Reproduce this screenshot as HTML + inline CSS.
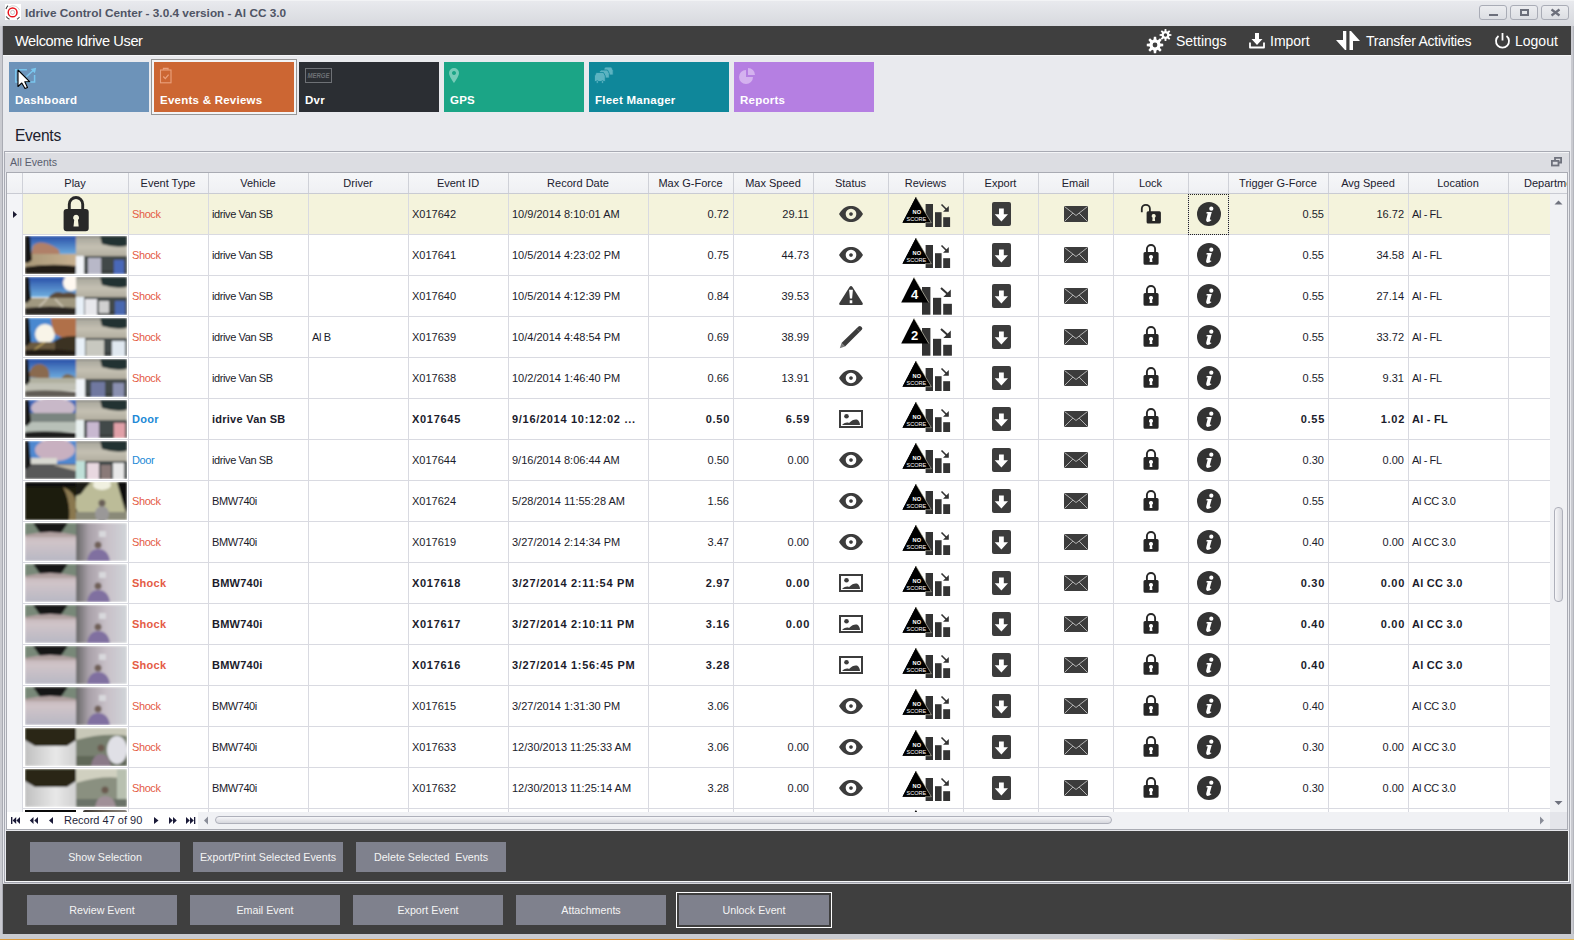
<!DOCTYPE html><html><head><meta charset="utf-8"><style>
html,body{margin:0;padding:0;}
body{width:1574px;height:940px;position:relative;overflow:hidden;background:#e9eaee;font-family:"Liberation Sans", sans-serif;}
div{box-sizing:border-box;}
.t{position:absolute;white-space:nowrap;font-size:11px;color:#1b1b2b;}
.r{text-align:right;}
.tx{letter-spacing:-0.4px;}
.b{font-weight:bold;letter-spacing:0.25px;}
.bn{font-weight:bold;letter-spacing:0.7px;}
.btn{position:absolute;width:150px;height:30px;background:#7f818d;color:#f4f4f4;font-size:10.7px;text-align:center;line-height:30px;}
</style></head><body>
<svg width="0" height="0" style="position:absolute">
<defs>
<g id="appicon">
 <rect x="0" y="0" width="16" height="16" fill="#fff"/>
 <path d="M1,5 A7.8,7.8 0 0 1 3,1.6 M1.2,12.5 A7.8,7.8 0 0 0 4.5,15.2 M12,15.2 A7.8,7.8 0 0 0 14.5,13" stroke="#444" stroke-width="1.1" fill="none"/>
 <path d="M4,3 A7,7 0 0 1 14.5,6" stroke="#c8c8c8" stroke-width="0.8" fill="none"/>
 <circle cx="7.6" cy="8.4" r="4.4" stroke="#e8141c" stroke-width="1.5" fill="none"/>
 <circle cx="7.6" cy="8.4" r="2" stroke="#b0b0b0" stroke-width="0.7" fill="none"/>
</g>
<g id="wmin"><rect x="10" y="9" width="9" height="2" fill="#6c6f7b"/></g>
<g id="wmax"><rect x="11" y="5" width="7" height="5" stroke="#6c6f7b" stroke-width="2" fill="none"/></g>
<g id="wclose"><path d="M10.5,4.5 L18.5,10.5 M18.5,4.5 L10.5,10.5" stroke="#6c6f7b" stroke-width="2.2"/></g>
<g id="gears" fill="#fff" fill-rule="evenodd">
 <path d="M7.56,11.59 L7.83,8.78 L10.17,8.78 L10.44,11.59 L11.81,12.16 L13.98,10.36 L15.64,12.02 L13.84,14.19 L14.41,15.56 L17.22,15.83 L17.22,18.17 L14.41,18.44 L13.84,19.81 L15.64,21.98 L13.98,23.64 L11.81,21.84 L10.44,22.41 L10.17,25.22 L7.83,25.22 L7.56,22.41 L6.19,21.840 L4.02,23.64 L2.36,21.98 L4.16,19.81 L3.59,18.44 L0.78,18.17 L0.78,15.83 L3.59,15.56 L4.16,14.19 L2.36,12.02 L4.02,10.36 L6.19,12.16 Z M11.4,17 A2.4,2.4 0 1 0 6.6,17 A2.4,2.4 0 1 0 11.4,17 Z"/>
 <path d="M18.47,3.13 L18.65,1.06 L20.35,1.06 L20.53,3.13 L21.51,3.54 L23.10,2.20 L24.30,3.40 L22.96,4.99 L23.37,5.97 L25.44,6.15 L25.44,7.85 L23.37,8.03 L22.96,9.01 L24.30,10.60 L23.10,11.80 L21.51,10.46 L20.53,10.87 L20.35,12.94 L18.65,12.94 L18.47,10.87 L17.49,10.46 L15.90,11.80 L14.70,10.60 L16.04,9.01 L15.63,8.03 L13.56,7.85 L13.56,6.15 L15.63,5.97 L16.04,4.99 L14.70,3.40 L15.90,2.20 L17.49,3.54 Z M21.2,7 A1.7,1.7 0 1 0 17.8,7 A1.7,1.7 0 1 0 21.2,7 Z"/>
</g>
<g id="import">
 <path d="M6,0 H10 V6 H13.5 L8,12 L2.5,6 H6 Z" fill="#fff"/>
 <path d="M1,9.5 V14.5 H15 V9.5" fill="none" stroke="#fff" stroke-width="1.8" stroke-linejoin="round"/>
</g>
<g id="transfer" fill="#fff">
 <path d="M8,1 H11.3 V20 H10 L1,10 H8 Z"/>
 <path d="M14.5,1 H16 L25,11 H18 V20 H14.5 Z"/>
</g>
<g id="power">
 <path d="M4.5,4 A6.5,6.5 0 1 0 12.5,4" fill="none" stroke="#fff" stroke-width="1.8"/>
 <path d="M8.5,1 V8.5" stroke="#fff" stroke-width="1.8"/>
</g>
<g id="tdash" fill="none" stroke="#7ac6ee" stroke-width="1.5">
 <path d="M17.9,7.8 H6.7 V20 H25.6 V13"/>
 <path d="M17.3,14.7 L25.5,7.3"/>
 <path d="M27.2,5.8 L21.6,7.1 L25.9,11.3 Z" fill="#7ac6ee" stroke="none"/>
</g>
<g id="tevents" fill="none" stroke="#eaa07c" stroke-width="1.1">
 <rect x="6.5" y="8" width="10.5" height="12.8"/>
 <path d="M9.5,7.8 V6.5 H14 V7.8" stroke-width="1.3"/>
 <path d="M9.3,14.5 L11.3,16.6 L14.6,12.6" stroke-width="1.3"/>
</g>
<g id="tdvr">
 <rect x="6.5" y="6.5" width="26" height="14" fill="none" stroke="#6e7176" stroke-width="1"/>
 <text x="19.5" y="16" font-size="6.5" font-weight="bold" font-style="italic" fill="#6e7176" text-anchor="middle" font-family="Liberation Sans" textLength="22" lengthAdjust="spacingAndGlyphs">MERGE</text>
</g>
<g id="tgps" fill="#76ccb8">
 <path d="M10,6 A5,5 0 0 1 15,11 C15,14.5 10,21 10,21 C10,21 5,14.5 5,11 A5,5 0 0 1 10,6 Z M10,9 A2,2 0 1 0 10.01,9 Z" fill-rule="evenodd"/>
</g>
<g id="tfleet" fill="#5cb3c1" stroke="#0f879a" stroke-width="0.8">
 <path d="M15,6.5 L16.6,5 H22.5 L24.2,8.5 V13 H15 Z"/>
 <path d="M10.5,9.5 L12.2,8 H18.5 L20.3,11.5 V16 H10.5 Z"/>
 <path d="M5.5,14 L7.3,10.5 H14.5 L16.3,14 V19.5 H5.5 Z"/>
 <circle cx="8.3" cy="20" r="1.3"/><circle cx="13.5" cy="20" r="1.3"/>
</g>
<g id="treports" fill="#d4b2ef">
 <path d="M12,8 A7,7 0 1 0 19,15 H12 Z"/>
 <path d="M14,6 A7,7 0 0 1 21,13 H14 Z"/>
</g>
<g id="cursor">
 <path d="M1,1 V17.5 L4.8,14 L8,19.5 L10.5,18.5 L7.8,12.8 H12.8 Z" fill="#fff" stroke="#000" stroke-width="1.1" stroke-linejoin="round"/>
</g>
<g id="restore" fill="none" stroke="#6e717c" stroke-width="1.8">
 <path d="M4,3 V0.9 H10.1 V5.5 H8"/>
 <rect x="0.9" y="3.9" width="6.6" height="4.6"/>
</g>
<g id="biglock" fill="#282828">
 <path d="M7.3,14 V8.2 A6.7,6.7 0 0 1 20.7,8.2 V14" fill="none" stroke="#282828" stroke-width="2.9"/>
 <path d="M1.6,16 A3,3 0 0 1 4.6,13 H23.7 A3,3 0 0 1 26.7,16 V32.3 A3,3 0 0 1 23.7,35.3 H4.6 A3,3 0 0 1 1.6,32.3 Z M14.1,18.7 A3,3 0 0 0 12.2,24 L11.5,30.5 H16.7 L16,24 A3,3 0 0 0 14.1,18.7 Z" fill-rule="evenodd"/>
</g>
<g id="eye">
 <path d="M0,8 C4,1.5 8,0 12,0 C16,0 20,1.5 24,8 C20,14.5 16,16 12,16 C8,16 4,14.5 0,8 Z M12,2.7 A5.3,5.3 0 1 0 12.01,2.7 Z M12,6.2 A1.8,1.8 0 1 1 11.99,6.2 Z" fill="#3c3c3c" fill-rule="evenodd"/>
</g>
<g id="warn">
 <path d="M10.5,2 Q12,0 13.5,2 L23.6,18 Q24.4,20 22.5,20 H1.5 Q-0.4,20 0.4,18 Z M10.1,4.8 H13.9 L13.1,13.6 H10.9 Z M10.7,15.2 H13.3 V18.2 H10.7 Z" fill="#3c3c3c" fill-rule="evenodd"/>
</g>
<g id="pencil">
 <path d="M19.5,1.5 Q20.8,0.3 22,1.5 L22.8,2.3 Q24,3.5 22.8,4.8 L6,21.5 L2.5,18 Z" fill="#3c3c3c"/>
 <path d="M2.5,18 L6,21.5 L0.8,23.2 Z" fill="#7a7a7a"/>
 <path d="M17.6,3.4 L21,6.8" stroke="#7a7a7a" stroke-width="0.7"/>
</g>
<g id="image">
 <rect x="1" y="1" width="22" height="16" fill="none" stroke="#3c3c3c" stroke-width="2"/>
 <circle cx="7.5" cy="6.2" r="2.3" fill="#3c3c3c"/>
 <path d="M3,15 C6,12.5 8,12 10,13 C13,10 15.5,9 18,9.5 C20,10.5 21,13 21,15 Z" fill="#3c3c3c"/>
</g>
<g id="noscore">
 <path d="M13.9,1 L29.3,26.7 H0.5 Z" fill="#000"/>
 <path d="M13.9,1 L29.3,26.7" stroke="#e4e2c8" stroke-width="0.6"/>
 <rect x="23.6" y="8" width="7.4" height="23" fill="#333"/>
 <rect x="33" y="16.2" width="6.6" height="14.8" fill="#333"/>
 <rect x="41.2" y="21.2" width="6.9" height="9.8" fill="#333"/>
 <path d="M13.9,1 L29.3,26.7 H0.5 Z" fill="#000"/>
 <path d="M14.5,2 L29.3,26.7 L23,26.7" fill="none" stroke="#e8e6d0" stroke-width="0.5"/>
 <path d="M39.5,8.5 L45.5,14.5" stroke="#333" stroke-width="1.6"/>
 <path d="M46.8,10 V15.8 H41 Z" fill="#333"/>
 <text x="14.8" y="18.2" font-size="5.6" fill="#fff" text-anchor="middle" font-family="Liberation Sans" font-weight="bold">NO</text>
 <text x="14.3" y="25" font-size="5.5" fill="#fff" text-anchor="middle" font-family="Liberation Sans" textLength="19.6" lengthAdjust="spacingAndGlyphs">SCORE</text>
</g>
<g id="noscore_partial">
 <path d="M13.9,1 L15.7,4 H12.1 Z" fill="#000"/>
</g>
<g id="scorebase">
 <rect x="22" y="11" width="8.4" height="27.7" fill="#333"/>
 <rect x="33" y="21.8" width="8.2" height="16.9" fill="#333"/>
 <rect x="43.2" y="27.8" width="8.7" height="10.9" fill="#333"/>
 <path d="M14,1.3 L28.8,26.5 H1.2 Z" fill="#000"/>
 <path d="M14,1.3 L28.8,26.5" stroke="#e8e6d0" stroke-width="0.6"/>
 <path d="M41,12 L48.5,18.8" stroke="#333" stroke-width="2"/>
 <path d="M50.8,13.5 V21 H43.3 Z" fill="#333"/>
</g>
<g id="score4"><use href="#scorebase"/><text x="14.6" y="23.3" font-size="13" font-weight="bold" fill="#fff" text-anchor="middle" font-family="Liberation Sans">4</text></g>
<g id="score2"><use href="#scorebase"/><text x="14.6" y="23.3" font-size="13" font-weight="bold" fill="#fff" text-anchor="middle" font-family="Liberation Sans">2</text></g>
<g id="export">
 <rect x="0" y="0" width="19" height="24" rx="2" fill="#3c3c3c"/>
 <path d="M7,6.4 H11.8 V12.2 H16 L9.4,19.6 L2.7,12.2 H7 Z" fill="#fff"/>
</g>
<g id="email">
 <rect x="0" y="0" width="24" height="16" rx="1.2" fill="#3c3c3c"/>
 <path d="M0.8,0.8 L12,9.5 L23.2,0.8 M0.8,15.2 L8.8,7.2 M23.2,15.2 L15.2,7.2" fill="none" stroke="#e6e6e6" stroke-width="0.7"/>
</g>
<g id="lock">
 <path d="M3.9,9 V5.1 A4.1,4.1 0 0 1 12.1,5.1 V9" fill="none" stroke="#262626" stroke-width="1.9"/>
 <path d="M0.5,9.5 A1.5,1.5 0 0 1 2,8 H14.1 A1.5,1.5 0 0 1 15.6,9.5 V19.3 A1.5,1.5 0 0 1 14.1,20.8 H2 A1.5,1.5 0 0 1 0.5,19.3 Z M8,11 A2,2 0 0 0 6.9,14.7 L6.6,17.9 H9.4 L9.1,14.7 A2,2 0 0 0 8,11 Z" fill="#262626" fill-rule="evenodd"/>
</g>
<g id="unlock">
 <path d="M1.8,9.2 V5.85 A4.05,4.05 0 0 1 9.9,5.85 V9" fill="none" stroke="#262626" stroke-width="1.8"/>
 <path d="M6.6,9.7 A1.5,1.5 0 0 1 8.1,8.2 H19.4 A1.5,1.5 0 0 1 20.9,9.7 V19.1 A1.5,1.5 0 0 1 19.4,20.6 H8.1 A1.5,1.5 0 0 1 6.6,19.1 Z M13.7,11 A2,2 0 0 0 12.6,14.7 L12.3,18 H15.1 L14.8,14.7 A2,2 0 0 0 13.7,11 Z" fill="#262626" fill-rule="evenodd"/>
</g>
<g id="info">
 <circle cx="12" cy="12" r="12" fill="#333"/>
 <circle cx="14.3" cy="6.7" r="2.1" fill="#fff"/>
 <path d="M9.6,10 H14.8 L12.9,16.8 Q12.6,18 14,17.5 L14.4,18.3 Q12.2,20.1 10.3,19.9 Q8.7,19.5 9.2,17.6 L10.7,11.4 H9.4 Z" fill="#fff"/>
</g>
<g id="rowarrow"><path d="M2,2 L6,5.5 L2,9 Z" fill="#1a1a30"/></g>
<g id="vup"><path d="M1.5,6.5 L5.5,2.5 L9.5,6.5 Z" fill="#6f727e"/></g>
<g id="vdown"><path d="M1.5,2 L5.5,6 L9.5,2 Z" fill="#6f727e"/></g>
<g id="hleft"><path d="M5,0.5 L1,4.5 L5,8.5 Z" fill="#8a8d98"/></g>
<g id="hright"><path d="M2,0.5 L6,4.5 L2,8.5 Z" fill="#8a8d98"/></g>
<g id="nav" fill="#1a1a38">
 <rect x="3" y="3" width="1.4" height="7"/>
 <path d="M8.2,3 L4.6,6.5 L8.2,10 Z M12,3 L8.4,6.5 L12,10 Z"/>
 <path d="M25.5,3 L21.8,6.5 L25.5,10 Z M30,3 L26.3,6.5 L30,10 Z"/>
 <path d="M45,3 L41,6.5 L45,10 Z"/>
 <path d="M146,3 L150.5,6.5 L146,10 Z"/>
 <path d="M161,3 L164.8,6.5 L161,10 Z M165,3 L168.8,6.5 L165,10 Z"/>
 <path d="M178,3 L181.8,6.5 L178,10 Z M182,3 L185.8,6.5 L182,10 Z"/>
 <rect x="186" y="3" width="1.3" height="7"/>
</g>
</defs>
</svg>

<svg width="0" height="0" style="position:absolute">
<defs>
<filter id="bl" x="-5%" y="-5%" width="110%" height="110%"><feGaussianBlur stdDeviation="0.9"/></filter>
<linearGradient id="sky1" x1="0" y1="0" x2="0" y2="1"><stop offset="0" stop-color="#2a50a8"/><stop offset="1" stop-color="#70b0e0"/></linearGradient>
<linearGradient id="road1" x1="0" y1="0" x2="1" y2="0"><stop offset="0" stop-color="#a89878"/><stop offset="1" stop-color="#c8b090"/></linearGradient>
<linearGradient id="ceil" x1="0" y1="0" x2="0" y2="1"><stop offset="0" stop-color="#a8a69c"/><stop offset="0.5" stop-color="#c4c0b2"/><stop offset="1" stop-color="#b0ac9e"/></linearGradient>
<linearGradient id="domeH" x1="0" y1="0" x2="0" y2="1"><stop offset="0" stop-color="#a89898"/><stop offset="0.5" stop-color="#d0c4c8"/><stop offset="1" stop-color="#b8b8c4"/></linearGradient>
<linearGradient id="roomH" x1="0" y1="0" x2="1" y2="0"><stop offset="0" stop-color="#686868"/><stop offset="0.25" stop-color="#a8a0a8"/><stop offset="0.6" stop-color="#c8c0c8"/><stop offset="1" stop-color="#d0d4d8"/></linearGradient>
<linearGradient id="floorI" x1="0" y1="0" x2="1" y2="0"><stop offset="0" stop-color="#c0c0c0"/><stop offset="0.6" stop-color="#e8e8e8"/><stop offset="1" stop-color="#d0d0d0"/></linearGradient>

<g id="vanR">
 <rect x="51" y="0" width="51" height="38" fill="#4a4a48"/>
 <rect x="51" y="1" width="51" height="20" fill="url(#ceil)"/>
 <path d="M75,0 H102 V10 Q90,12 77,8 Z" fill="#203030"/>
 <rect x="51" y="20" width="51" height="18" fill="#42494a"/>
 <rect x="51" y="34" width="51" height="4" fill="#3a4040"/>
</g>

<g id="thA">
 <g filter="url(#bl)">
 <rect x="0" y="0" width="51" height="19" fill="url(#sky1)"/>
 <path d="M8,10 Q12,5 20,7 Q28,9 34,14 L35,20 H6 Z" fill="#b08068"/>
 <rect x="0" y="18" width="51" height="14" fill="url(#road1)"/>
 <path d="M0,31 Q25,27 51,30 V38 H0 Z" fill="#201c18"/>
 <path d="M0,0 H5 L7,24 L3,27 H0 Z" fill="#141414"/>
 <use href="#vanR"/>
 <rect x="51" y="20" width="8" height="18" fill="#f2f4f8"/>
 <rect x="63" y="22" width="13" height="16" fill="#b8b8c8"/>
 <rect x="89" y="24" width="10" height="14" fill="#4a68b8"/>
 </g>
</g>
<g id="thB">
 <g filter="url(#bl)">
 <rect x="0" y="0" width="51" height="20" fill="url(#sky1)"/>
 <circle cx="46" cy="6" r="8" fill="#fff8f0"/>
 <path d="M24,20 Q30,13 38,16 Q46,14 51,17 V22 H24 Z" fill="#5a4a38"/>
 <rect x="0" y="21" width="51" height="11" fill="#a09880"/>
 <path d="M12,32 L22,22 M40,32 L30,22" stroke="#d8d0c0" stroke-width="1.2"/>
 <path d="M0,31 Q25,28 51,31 V38 H0 Z" fill="#2a2620"/>
 <path d="M0,0 H4 L6,22 L2,26 H0 Z" fill="#141414"/>
 <use href="#vanR"/>
 <rect x="51" y="20" width="8" height="18" fill="#e8f0f8"/>
 <rect x="60" y="22" width="12" height="16" fill="#e8e8ec"/>
 <rect x="74" y="24" width="10" height="12" fill="#d0d0d0"/>
 <rect x="90" y="24" width="10" height="14" fill="#4a68b0"/>
 </g>
</g>
<g id="thC">
 <g filter="url(#bl)">
 <rect x="0" y="0" width="51" height="24" fill="#4a88d0"/>
 <circle cx="20" cy="16" r="10" fill="#f8f4e8"/>
 <path d="M26,0 H51 V20 Q40,22 30,16 Q26,8 26,0 Z" fill="#b07048"/>
 <path d="M28,24 Q36,17 51,18 V34 H28 Z" fill="#3a3024"/>
 <rect x="0" y="24" width="30" height="10" fill="#6a5a40"/>
 <path d="M6,34 L20,24" stroke="#e8c870" stroke-width="1"/>
 <path d="M0,32 Q25,30 51,33 V38 H0 Z" fill="#201c14"/>
 <path d="M0,0 H4 L6,24 L2,28 H0 Z" fill="#141414"/>
 <use href="#vanR"/>
 <rect x="51" y="20" width="9" height="18" fill="#e8f0f8"/>
 <rect x="61" y="22" width="18" height="16" fill="#c8c8c0"/>
 <rect x="87" y="23" width="13" height="15" fill="#e0e8f0"/>
 </g>
</g>
<g id="thD">
 <g filter="url(#bl)">
 <rect x="0" y="0" width="51" height="20" fill="url(#sky1)"/>
 <path d="M3,18 Q6,4 16,5 Q26,8 24,20 Z" fill="#8a6a50"/>
 <path d="M36,20 Q40,13 46,16 Q50,17 51,20 Z" fill="#7a6a50"/>
 <rect x="0" y="19" width="51" height="13" fill="#b0b0a0"/>
 <rect x="0" y="24" width="51" height="8" fill="#c0c0b4"/>
 <path d="M0,32 Q25,30 51,33 V38 H0 Z" fill="#605c54"/>
 <path d="M0,0 H3 L5,22 L2,26 H0 Z" fill="#141414"/>
 <use href="#vanR"/>
 <rect x="51" y="20" width="9" height="18" fill="#f0f4f8"/>
 <rect x="66" y="23" width="14" height="15" fill="#7078a0"/>
 <rect x="88" y="24" width="11" height="14" fill="#8a90b0"/>
 </g>
</g>
<g id="thE">
 <g filter="url(#bl)">
 <rect x="0" y="0" width="51" height="22" fill="#4068b8"/>
 <ellipse cx="28" cy="8" rx="22" ry="10" fill="#c8b8c8"/>
 <rect x="4" y="13" width="47" height="9" fill="#7a8480"/>
 <rect x="0" y="22" width="51" height="10" fill="#b8c0b8"/>
 <path d="M0,32 Q25,30 51,33 V38 H0 Z" fill="#1a1a1a"/>
 <path d="M0,0 H4 L6,22 L2,26 H0 Z" fill="#141414"/>
 <use href="#vanR"/>
 <rect x="51" y="20" width="8" height="18" fill="#e8f0f0"/>
 <rect x="62" y="22" width="12" height="16" fill="#c8b8d0"/>
 <rect x="89" y="23" width="11" height="15" fill="#e0a0a8"/>
 </g>
</g>
<g id="thF">
 <g filter="url(#bl)">
 <rect x="0" y="0" width="51" height="24" fill="#5088d0"/>
 <ellipse cx="30" cy="9" rx="20" ry="11" fill="#c8b0c0"/>
 <rect x="6" y="17" width="26" height="7" fill="#d8d8d0"/>
 <rect x="0" y="23" width="51" height="15" fill="#585858"/>
 <path d="M28,24 L51,30 V24 Z" fill="#c0b8a8"/>
 <path d="M0,0 H4 L6,24 L2,28 H0 Z" fill="#141414"/>
 <use href="#vanR"/>
 <rect x="51" y="20" width="9" height="18" fill="#c0e0d8"/>
 <rect x="62" y="22" width="12" height="16" fill="#e8d8e0"/>
 <rect x="76" y="24" width="10" height="14" fill="#8a7a78"/>
 <rect x="88" y="22" width="11" height="16" fill="#e8e8e8"/>
 </g>
</g>
<g id="thG">
 <g filter="url(#bl)">
 <rect x="0" y="0" width="51" height="38" fill="#1e1a0e"/>
 <rect x="0" y="0" width="51" height="5" fill="#0c0c0c"/>
 <path d="M38,5 Q50,10 51,20 V38 H44 Q46,20 38,5 Z" fill="#8a7850"/>
 <rect x="51" y="0" width="51" height="38" fill="#bcbc98"/>
 <ellipse cx="77" cy="3" rx="9" ry="5" fill="#f0f0e0"/>
 <path d="M51,0 H66 Q60,6 56,12 L51,14 Z" fill="#1a1a14"/>
 <path d="M92,0 H102 V34 Q98,22 92,0 Z" fill="#101010"/>
 <path d="M51,26 Q56,38 51,38 Z" fill="#303028"/>
 <rect x="51" y="30" width="51" height="8" fill="#8a8a78"/>
 <ellipse cx="77" cy="32" rx="7" ry="8" fill="#9a9898"/>
 <circle cx="77" cy="21" r="3.5" fill="#6a6058"/>
 </g>
</g>
<g id="thH">
 <g filter="url(#bl)">
 <rect x="0" y="0" width="51" height="38" fill="url(#domeH)"/>
 <rect x="0" y="0" width="51" height="12" fill="#788878"/>
 <path d="M8,0 H43 L36,10 H15 Z" fill="#161616"/>
 <path d="M0,12 Q25,6 51,12 V14 H0 Z" fill="#b0a0a0"/>
 <rect x="51" y="0" width="51" height="38" fill="url(#roomH)"/>
 <rect x="74" y="8" width="7" height="6" fill="#d8d8dc"/>
 <path d="M62,38 Q64,26 73,26 Q83,26 85,38 Z" fill="#8070a0"/>
 <circle cx="73" cy="22" r="3.5" fill="#706058"/>
 </g>
</g>
<g id="thI">
 <g filter="url(#bl)">
 <rect x="0" y="0" width="51" height="38" fill="url(#floorI)"/>
 <path d="M0,0 H51 V12 L42,18 H10 L0,12 Z" fill="#2a2618"/>
 <rect x="51" y="0" width="51" height="38" fill="#788070"/>
 <path d="M51,0 H102 V8 Q80,4 51,12 Z" fill="#c8c8b8"/>
 <rect x="51" y="28" width="51" height="10" fill="#606858"/>
 <ellipse cx="92" cy="22" rx="10" ry="14" fill="#e0e0e6"/>
 <path d="M66,38 Q68,26 76,26 Q84,26 86,38 Z" fill="#8a7a88"/>
 <circle cx="76" cy="20" r="3.5" fill="#6a5a50"/>
 </g>
</g>
<g id="thJ">
 <g filter="url(#bl)">
 <rect x="0" y="0" width="51" height="38" fill="url(#floorI)"/>
 <path d="M0,0 H51 V12 L42,18 H10 L0,12 Z" fill="#2a2618"/>
 <rect x="51" y="0" width="51" height="38" fill="#8a9080"/>
 <path d="M51,0 H102 V10 Q80,5 51,14 Z" fill="#d0d0c0"/>
 <rect x="92" y="0" width="10" height="38" fill="#b8c0b0"/>
 <rect x="51" y="30" width="51" height="8" fill="#6a7268"/>
 <path d="M70,38 Q72,27 80,27 Q89,27 91,38 Z" fill="#a09098"/>
 <circle cx="80" cy="21" r="3.5" fill="#6a5a50"/>
 </g>
</g>
</defs>
</svg>

<div style="position:absolute;left:0px;top:0px;width:1574px;height:26px;background:linear-gradient(#e9eaee,#d7d9de);"></div>
<div style="position:absolute;left:0px;top:0px;width:1574px;height:1px;background:#f2f3f5;"></div>
<div class="t" style="left:25px;top:6px;font-size:11.8px;font-weight:bold;color:#4f5464;letter-spacing:0px">Idrive Control Center - 3.0.4 version - Al CC 3.0</div>
<svg style="position:absolute;left:5px;top:4px" width="16" height="16"><use href="#appicon"/></svg>
<div style="position:absolute;left:1479px;top:5px;width:28px;height:15px;border:1px solid #a9acb6;border-radius:3px;background:linear-gradient(#ecedf0,#dcdee3);"></div>
<svg style="position:absolute;left:1479px;top:5px" width="28" height="15"><use href="#wmin"/></svg>
<div style="position:absolute;left:1510px;top:5px;width:28px;height:15px;border:1px solid #a9acb6;border-radius:3px;background:linear-gradient(#ecedf0,#dcdee3);"></div>
<svg style="position:absolute;left:1510px;top:5px" width="28" height="15"><use href="#wmax"/></svg>
<div style="position:absolute;left:1541px;top:5px;width:28px;height:15px;border:1px solid #a9acb6;border-radius:3px;background:linear-gradient(#ecedf0,#dcdee3);"></div>
<svg style="position:absolute;left:1541px;top:5px" width="28" height="15"><use href="#wclose"/></svg>
<div style="position:absolute;left:0px;top:26px;width:3px;height:914px;background:#c9cad0;"></div>
<div style="position:absolute;left:2px;top:26px;width:1px;height:908px;background:#a9abb3;"></div>
<div style="position:absolute;left:1571px;top:26px;width:3px;height:914px;background:#c9cad0;"></div>
<div style="position:absolute;left:1573px;top:26px;width:1px;height:914px;background:#b4b6bd;"></div>
<div style="position:absolute;left:0px;top:934px;width:1574px;height:6px;background:#c9cbd1;"></div>
<div style="position:absolute;left:0px;top:939px;width:1574px;height:1px;background:linear-gradient(90deg,#dc9a3c,#d88a30 45%,#f2e8de 55%,#f4eee8 77%,#e8b848 80%,#eabc50);"></div>
<div style="position:absolute;left:3px;top:26px;width:1568px;height:29px;background:#3f3f3f;"></div>
<div style="position:absolute;left:3px;top:55px;width:1568px;height:1px;background:#f6f7f9;"></div>
<div class="t" style="left:15px;top:32px;font-size:14.6px;letter-spacing:-0.4px;line-height:18px;color:#fff">Welcome Idrive User</div>
<svg style="position:absolute;left:1146px;top:28px" width="26" height="26"><use href="#gears"/></svg>
<div class="t" style="left:1176px;top:33px;font-size:14px;line-height:17px;color:#fff">Settings</div>
<svg style="position:absolute;left:1249px;top:33px" width="16" height="16"><use href="#import"/></svg>
<div class="t" style="left:1270px;top:33px;font-size:14px;line-height:17px;color:#fff">Import</div>
<svg style="position:absolute;left:1335px;top:30px" width="25" height="21"><use href="#transfer"/></svg>
<div class="t" style="left:1366px;top:33px;font-size:14px;letter-spacing:-0.25px;line-height:17px;color:#fff">Transfer Activities</div>
<svg style="position:absolute;left:1494px;top:32px" width="17" height="18"><use href="#power"/></svg>
<div class="t" style="left:1515px;top:33px;font-size:14px;line-height:17px;color:#fff">Logout</div>
<div style="position:absolute;left:9px;top:62px;width:140px;height:50px;background:#6d93b9;"></div>
<svg style="position:absolute;left:9px;top:62px" width="40" height="30"><use href="#tdash"/></svg>
<div class="t b" style="left:15px;top:93px;font-size:11.5px;line-height:14px;color:#fff">Dashboard</div>
<div style="position:absolute;left:151px;top:59px;width:146px;height:56px;border:1px solid #969696;background:#f3f4f6;"></div>
<div style="position:absolute;left:154px;top:62px;width:140px;height:50px;background:#cc6633;"></div>
<svg style="position:absolute;left:154px;top:62px" width="40" height="30"><use href="#tevents"/></svg>
<div class="t b" style="left:160px;top:93px;font-size:11.5px;line-height:14px;color:#fff">Events &amp; Reviews</div>
<div style="position:absolute;left:299px;top:62px;width:140px;height:50px;background:#2b2e33;"></div>
<svg style="position:absolute;left:299px;top:62px" width="40" height="30"><use href="#tdvr"/></svg>
<div class="t b" style="left:305px;top:93px;font-size:11.5px;line-height:14px;color:#fff">Dvr</div>
<div style="position:absolute;left:444px;top:62px;width:140px;height:50px;background:#1ba586;"></div>
<svg style="position:absolute;left:444px;top:62px" width="40" height="30"><use href="#tgps"/></svg>
<div class="t b" style="left:450px;top:93px;font-size:11.5px;line-height:14px;color:#fff">GPS</div>
<div style="position:absolute;left:589px;top:62px;width:140px;height:50px;background:#0f879a;"></div>
<svg style="position:absolute;left:589px;top:62px" width="40" height="30"><use href="#tfleet"/></svg>
<div class="t b" style="left:595px;top:93px;font-size:11.5px;line-height:14px;color:#fff">Fleet Manager</div>
<div style="position:absolute;left:734px;top:62px;width:140px;height:50px;background:#b57fe2;"></div>
<svg style="position:absolute;left:734px;top:62px" width="40" height="30"><use href="#treports"/></svg>
<div class="t b" style="left:740px;top:93px;font-size:11.5px;line-height:14px;color:#fff">Reports</div>
<svg style="position:absolute;left:17px;top:69px" width="14" height="22"><use href="#cursor"/></svg>
<div class="t" style="left:15px;top:126px;font-size:15.6px;letter-spacing:-0.3px;line-height:19px;color:#20202c">Events</div>
<div style="position:absolute;left:4px;top:151px;width:1566px;height:733px;border:1px solid #a8aab3;background:#e9eaee;"></div>
<div style="position:absolute;left:5px;top:152px;width:1564px;height:20px;background:#dcdde2;"></div>
<div style="position:absolute;left:5px;top:152px;width:1564px;height:1px;background:#f4f5f7;"></div>
<div class="t" style="left:10px;top:156px;font-size:10.6px;line-height:13px;color:#5a5e6e">All Events</div>
<svg style="position:absolute;left:1551px;top:157px" width="12" height="10"><use href="#restore"/></svg>
<div style="position:absolute;left:6px;top:172px;width:1562px;height:658px;border:1px solid #a9abb3;background:#fff;"></div>
<div style="position:absolute;left:7px;top:173px;width:1560px;height:20px;background:linear-gradient(#f6f7f9,#eff0f3);"></div>
<div style="position:absolute;left:7px;top:193px;width:1560px;height:1px;background:#c9cbd3;"></div>
<div class="t" style="left:22px;top:173px;width:106px;text-align:center;line-height:20px;color:#20202e">Play</div>
<div class="t" style="left:128px;top:173px;width:80px;text-align:center;line-height:20px;color:#20202e">Event Type</div>
<div class="t" style="left:208px;top:173px;width:100px;text-align:center;line-height:20px;color:#20202e">Vehicle</div>
<div class="t" style="left:308px;top:173px;width:100px;text-align:center;line-height:20px;color:#20202e">Driver</div>
<div class="t" style="left:408px;top:173px;width:100px;text-align:center;line-height:20px;color:#20202e">Event ID</div>
<div class="t" style="left:508px;top:173px;width:140px;text-align:center;line-height:20px;color:#20202e">Record Date</div>
<div class="t" style="left:648px;top:173px;width:85px;text-align:center;line-height:20px;color:#20202e">Max G-Force</div>
<div class="t" style="left:733px;top:173px;width:80px;text-align:center;line-height:20px;color:#20202e">Max Speed</div>
<div class="t" style="left:813px;top:173px;width:75px;text-align:center;line-height:20px;color:#20202e">Status</div>
<div class="t" style="left:888px;top:173px;width:75px;text-align:center;line-height:20px;color:#20202e">Reviews</div>
<div class="t" style="left:963px;top:173px;width:75px;text-align:center;line-height:20px;color:#20202e">Export</div>
<div class="t" style="left:1038px;top:173px;width:75px;text-align:center;line-height:20px;color:#20202e">Email</div>
<div class="t" style="left:1113px;top:173px;width:75px;text-align:center;line-height:20px;color:#20202e">Lock</div>
<div class="t" style="left:1228px;top:173px;width:100px;text-align:center;line-height:20px;color:#20202e">Trigger G-Force</div>
<div class="t" style="left:1328px;top:173px;width:80px;text-align:center;line-height:20px;color:#20202e">Avg Speed</div>
<div class="t" style="left:1408px;top:173px;width:100px;text-align:center;line-height:20px;color:#20202e">Location</div>
<div class="t" style="left:1524px;top:173px;width:43px;overflow:hidden;line-height:20px;color:#20202e">Department</div>
<div style="position:absolute;left:22px;top:173px;width:1px;height:20px;background:#cfd1d8;"></div>
<div style="position:absolute;left:128px;top:173px;width:1px;height:20px;background:#cfd1d8;"></div>
<div style="position:absolute;left:208px;top:173px;width:1px;height:20px;background:#cfd1d8;"></div>
<div style="position:absolute;left:308px;top:173px;width:1px;height:20px;background:#cfd1d8;"></div>
<div style="position:absolute;left:408px;top:173px;width:1px;height:20px;background:#cfd1d8;"></div>
<div style="position:absolute;left:508px;top:173px;width:1px;height:20px;background:#cfd1d8;"></div>
<div style="position:absolute;left:648px;top:173px;width:1px;height:20px;background:#cfd1d8;"></div>
<div style="position:absolute;left:733px;top:173px;width:1px;height:20px;background:#cfd1d8;"></div>
<div style="position:absolute;left:813px;top:173px;width:1px;height:20px;background:#cfd1d8;"></div>
<div style="position:absolute;left:888px;top:173px;width:1px;height:20px;background:#cfd1d8;"></div>
<div style="position:absolute;left:963px;top:173px;width:1px;height:20px;background:#cfd1d8;"></div>
<div style="position:absolute;left:1038px;top:173px;width:1px;height:20px;background:#cfd1d8;"></div>
<div style="position:absolute;left:1113px;top:173px;width:1px;height:20px;background:#cfd1d8;"></div>
<div style="position:absolute;left:1188px;top:173px;width:1px;height:20px;background:#cfd1d8;"></div>
<div style="position:absolute;left:1228px;top:173px;width:1px;height:20px;background:#cfd1d8;"></div>
<div style="position:absolute;left:1328px;top:173px;width:1px;height:20px;background:#cfd1d8;"></div>
<div style="position:absolute;left:1408px;top:173px;width:1px;height:20px;background:#cfd1d8;"></div>
<div style="position:absolute;left:1508px;top:173px;width:1px;height:20px;background:#cfd1d8;"></div>
<div style="position:absolute;left:7px;top:194px;width:15px;height:618px;background:#f3f4f7;"></div>
<div style="position:absolute;left:22px;top:194px;width:1528px;height:40px;background:#f4f3dc;"></div>
<svg style="position:absolute;left:62px;top:196px" width="28" height="37"><use href="#biglock"/></svg>
<div class="t tx" style="left:132px;top:194px;line-height:40px;color:#e45c46">Shock</div>
<div class="t tx" style="left:212px;top:194px;line-height:40px">idrive Van SB</div>
<div class="t" style="left:412px;top:194px;line-height:40px">X017642</div>
<div class="t" style="left:512px;top:194px;line-height:40px">10/9/2014 8:10:01 AM</div>
<div class="t r" style="left:648px;width:81px;top:194px;line-height:40px">0.72</div>
<div class="t r" style="left:733px;width:76px;top:194px;line-height:40px">29.11</div>
<div class="t r" style="left:1228px;width:96px;top:194px;line-height:40px">0.55</div>
<div class="t r" style="left:1328px;width:76px;top:194px;line-height:40px">16.72</div>
<div class="t tx" style="left:1412px;top:194px;line-height:40px">Al - FL</div>
<svg style="position:absolute;left:839px;top:206px" width="24" height="16"><use href="#eye"/></svg>
<svg style="position:absolute;left:902px;top:196px" width="50" height="34"><use href="#noscore"/></svg>
<svg style="position:absolute;left:992px;top:202px" width="19" height="24"><use href="#export"/></svg>
<svg style="position:absolute;left:1064px;top:206px" width="24" height="16"><use href="#email"/></svg>
<svg style="position:absolute;left:1140px;top:203px" width="22" height="21"><use href="#unlock"/></svg>
<svg style="position:absolute;left:1197px;top:202px" width="24" height="24"><use href="#info"/></svg>
<div style="position:absolute;left:22px;top:234px;width:1528px;height:1px;background:#d9dae1;"></div>
<svg style="position:absolute;left:25px;top:236px" width="102" height="38"><use href="#thA"/></svg>
<div class="t tx" style="left:132px;top:235px;line-height:40px;color:#e45c46">Shock</div>
<div class="t tx" style="left:212px;top:235px;line-height:40px">idrive Van SB</div>
<div class="t" style="left:412px;top:235px;line-height:40px">X017641</div>
<div class="t" style="left:512px;top:235px;line-height:40px">10/5/2014 4:23:02 PM</div>
<div class="t r" style="left:648px;width:81px;top:235px;line-height:40px">0.75</div>
<div class="t r" style="left:733px;width:76px;top:235px;line-height:40px">44.73</div>
<div class="t r" style="left:1228px;width:96px;top:235px;line-height:40px">0.55</div>
<div class="t r" style="left:1328px;width:76px;top:235px;line-height:40px">34.58</div>
<div class="t tx" style="left:1412px;top:235px;line-height:40px">Al - FL</div>
<svg style="position:absolute;left:839px;top:247px" width="24" height="16"><use href="#eye"/></svg>
<svg style="position:absolute;left:902px;top:237px" width="50" height="34"><use href="#noscore"/></svg>
<svg style="position:absolute;left:992px;top:243px" width="19" height="24"><use href="#export"/></svg>
<svg style="position:absolute;left:1064px;top:247px" width="24" height="16"><use href="#email"/></svg>
<svg style="position:absolute;left:1143px;top:244px" width="16" height="21"><use href="#lock"/></svg>
<svg style="position:absolute;left:1197px;top:243px" width="24" height="24"><use href="#info"/></svg>
<div style="position:absolute;left:22px;top:275px;width:1528px;height:1px;background:#d9dae1;"></div>
<svg style="position:absolute;left:25px;top:277px" width="102" height="38"><use href="#thB"/></svg>
<div class="t tx" style="left:132px;top:276px;line-height:40px;color:#e45c46">Shock</div>
<div class="t tx" style="left:212px;top:276px;line-height:40px">idrive Van SB</div>
<div class="t" style="left:412px;top:276px;line-height:40px">X017640</div>
<div class="t" style="left:512px;top:276px;line-height:40px">10/5/2014 4:12:39 PM</div>
<div class="t r" style="left:648px;width:81px;top:276px;line-height:40px">0.84</div>
<div class="t r" style="left:733px;width:76px;top:276px;line-height:40px">39.53</div>
<div class="t r" style="left:1228px;width:96px;top:276px;line-height:40px">0.55</div>
<div class="t r" style="left:1328px;width:76px;top:276px;line-height:40px">27.14</div>
<div class="t tx" style="left:1412px;top:276px;line-height:40px">Al - FL</div>
<svg style="position:absolute;left:839px;top:285px" width="24" height="20"><use href="#warn"/></svg>
<svg style="position:absolute;left:900px;top:276px" width="54" height="40"><use href="#score4"/></svg>
<svg style="position:absolute;left:992px;top:284px" width="19" height="24"><use href="#export"/></svg>
<svg style="position:absolute;left:1064px;top:288px" width="24" height="16"><use href="#email"/></svg>
<svg style="position:absolute;left:1143px;top:285px" width="16" height="21"><use href="#lock"/></svg>
<svg style="position:absolute;left:1197px;top:284px" width="24" height="24"><use href="#info"/></svg>
<div style="position:absolute;left:22px;top:316px;width:1528px;height:1px;background:#d9dae1;"></div>
<svg style="position:absolute;left:25px;top:318px" width="102" height="38"><use href="#thC"/></svg>
<div class="t tx" style="left:132px;top:317px;line-height:40px;color:#e45c46">Shock</div>
<div class="t tx" style="left:212px;top:317px;line-height:40px">idrive Van SB</div>
<div class="t tx" style="left:312px;top:317px;line-height:40px">Al B</div>
<div class="t" style="left:412px;top:317px;line-height:40px">X017639</div>
<div class="t" style="left:512px;top:317px;line-height:40px">10/4/2014 4:48:54 PM</div>
<div class="t r" style="left:648px;width:81px;top:317px;line-height:40px">0.69</div>
<div class="t r" style="left:733px;width:76px;top:317px;line-height:40px">38.99</div>
<div class="t r" style="left:1228px;width:96px;top:317px;line-height:40px">0.55</div>
<div class="t r" style="left:1328px;width:76px;top:317px;line-height:40px">33.72</div>
<div class="t tx" style="left:1412px;top:317px;line-height:40px">Al - FL</div>
<svg style="position:absolute;left:839px;top:325px" width="24" height="24"><use href="#pencil"/></svg>
<svg style="position:absolute;left:900px;top:317px" width="54" height="40"><use href="#score2"/></svg>
<svg style="position:absolute;left:992px;top:325px" width="19" height="24"><use href="#export"/></svg>
<svg style="position:absolute;left:1064px;top:329px" width="24" height="16"><use href="#email"/></svg>
<svg style="position:absolute;left:1143px;top:326px" width="16" height="21"><use href="#lock"/></svg>
<svg style="position:absolute;left:1197px;top:325px" width="24" height="24"><use href="#info"/></svg>
<div style="position:absolute;left:22px;top:357px;width:1528px;height:1px;background:#d9dae1;"></div>
<svg style="position:absolute;left:25px;top:359px" width="102" height="38"><use href="#thD"/></svg>
<div class="t tx" style="left:132px;top:358px;line-height:40px;color:#e45c46">Shock</div>
<div class="t tx" style="left:212px;top:358px;line-height:40px">idrive Van SB</div>
<div class="t" style="left:412px;top:358px;line-height:40px">X017638</div>
<div class="t" style="left:512px;top:358px;line-height:40px">10/2/2014 1:46:40 PM</div>
<div class="t r" style="left:648px;width:81px;top:358px;line-height:40px">0.66</div>
<div class="t r" style="left:733px;width:76px;top:358px;line-height:40px">13.91</div>
<div class="t r" style="left:1228px;width:96px;top:358px;line-height:40px">0.55</div>
<div class="t r" style="left:1328px;width:76px;top:358px;line-height:40px">9.31</div>
<div class="t tx" style="left:1412px;top:358px;line-height:40px">Al - FL</div>
<svg style="position:absolute;left:839px;top:370px" width="24" height="16"><use href="#eye"/></svg>
<svg style="position:absolute;left:902px;top:360px" width="50" height="34"><use href="#noscore"/></svg>
<svg style="position:absolute;left:992px;top:366px" width="19" height="24"><use href="#export"/></svg>
<svg style="position:absolute;left:1064px;top:370px" width="24" height="16"><use href="#email"/></svg>
<svg style="position:absolute;left:1143px;top:367px" width="16" height="21"><use href="#lock"/></svg>
<svg style="position:absolute;left:1197px;top:366px" width="24" height="24"><use href="#info"/></svg>
<div style="position:absolute;left:22px;top:398px;width:1528px;height:1px;background:#d9dae1;"></div>
<svg style="position:absolute;left:25px;top:400px" width="102" height="38"><use href="#thE"/></svg>
<div class="t b" style="left:132px;top:399px;line-height:40px;color:#2189d6">Door</div>
<div class="t b" style="left:212px;top:399px;line-height:40px">idrive Van SB</div>
<div class="t bn" style="left:412px;top:399px;line-height:40px">X017645</div>
<div class="t bn" style="left:512px;top:399px;line-height:40px">9/16/2014 10:12:02 ...</div>
<div class="t r bn" style="left:648px;width:82px;top:399px;line-height:40px">0.50</div>
<div class="t r bn" style="left:733px;width:77px;top:399px;line-height:40px">6.59</div>
<div class="t r bn" style="left:1228px;width:97px;top:399px;line-height:40px">0.55</div>
<div class="t r bn" style="left:1328px;width:77px;top:399px;line-height:40px">1.02</div>
<div class="t b" style="left:1412px;top:399px;line-height:40px">Al - FL</div>
<svg style="position:absolute;left:839px;top:410px" width="24" height="18"><use href="#image"/></svg>
<svg style="position:absolute;left:902px;top:401px" width="50" height="34"><use href="#noscore"/></svg>
<svg style="position:absolute;left:992px;top:407px" width="19" height="24"><use href="#export"/></svg>
<svg style="position:absolute;left:1064px;top:411px" width="24" height="16"><use href="#email"/></svg>
<svg style="position:absolute;left:1143px;top:408px" width="16" height="21"><use href="#lock"/></svg>
<svg style="position:absolute;left:1197px;top:407px" width="24" height="24"><use href="#info"/></svg>
<div style="position:absolute;left:22px;top:439px;width:1528px;height:1px;background:#d9dae1;"></div>
<svg style="position:absolute;left:25px;top:441px" width="102" height="38"><use href="#thF"/></svg>
<div class="t tx" style="left:132px;top:440px;line-height:40px;color:#2189d6">Door</div>
<div class="t tx" style="left:212px;top:440px;line-height:40px">idrive Van SB</div>
<div class="t" style="left:412px;top:440px;line-height:40px">X017644</div>
<div class="t" style="left:512px;top:440px;line-height:40px">9/16/2014 8:06:44 AM</div>
<div class="t r" style="left:648px;width:81px;top:440px;line-height:40px">0.50</div>
<div class="t r" style="left:733px;width:76px;top:440px;line-height:40px">0.00</div>
<div class="t r" style="left:1228px;width:96px;top:440px;line-height:40px">0.30</div>
<div class="t r" style="left:1328px;width:76px;top:440px;line-height:40px">0.00</div>
<div class="t tx" style="left:1412px;top:440px;line-height:40px">Al - FL</div>
<svg style="position:absolute;left:839px;top:452px" width="24" height="16"><use href="#eye"/></svg>
<svg style="position:absolute;left:902px;top:442px" width="50" height="34"><use href="#noscore"/></svg>
<svg style="position:absolute;left:992px;top:448px" width="19" height="24"><use href="#export"/></svg>
<svg style="position:absolute;left:1064px;top:452px" width="24" height="16"><use href="#email"/></svg>
<svg style="position:absolute;left:1143px;top:449px" width="16" height="21"><use href="#lock"/></svg>
<svg style="position:absolute;left:1197px;top:448px" width="24" height="24"><use href="#info"/></svg>
<div style="position:absolute;left:22px;top:480px;width:1528px;height:1px;background:#d9dae1;"></div>
<svg style="position:absolute;left:25px;top:482px" width="102" height="38"><use href="#thG"/></svg>
<div class="t tx" style="left:132px;top:481px;line-height:40px;color:#e45c46">Shock</div>
<div class="t tx" style="left:212px;top:481px;line-height:40px">BMW740i</div>
<div class="t" style="left:412px;top:481px;line-height:40px">X017624</div>
<div class="t" style="left:512px;top:481px;line-height:40px">5/28/2014 11:55:28 AM</div>
<div class="t r" style="left:648px;width:81px;top:481px;line-height:40px">1.56</div>
<div class="t r" style="left:1228px;width:96px;top:481px;line-height:40px">0.55</div>
<div class="t tx" style="left:1412px;top:481px;line-height:40px">Al CC 3.0</div>
<svg style="position:absolute;left:839px;top:493px" width="24" height="16"><use href="#eye"/></svg>
<svg style="position:absolute;left:902px;top:483px" width="50" height="34"><use href="#noscore"/></svg>
<svg style="position:absolute;left:992px;top:489px" width="19" height="24"><use href="#export"/></svg>
<svg style="position:absolute;left:1064px;top:493px" width="24" height="16"><use href="#email"/></svg>
<svg style="position:absolute;left:1143px;top:490px" width="16" height="21"><use href="#lock"/></svg>
<svg style="position:absolute;left:1197px;top:489px" width="24" height="24"><use href="#info"/></svg>
<div style="position:absolute;left:22px;top:521px;width:1528px;height:1px;background:#d9dae1;"></div>
<svg style="position:absolute;left:25px;top:523px" width="102" height="38"><use href="#thH"/></svg>
<div class="t tx" style="left:132px;top:522px;line-height:40px;color:#e45c46">Shock</div>
<div class="t tx" style="left:212px;top:522px;line-height:40px">BMW740i</div>
<div class="t" style="left:412px;top:522px;line-height:40px">X017619</div>
<div class="t" style="left:512px;top:522px;line-height:40px">3/27/2014 2:14:34 PM</div>
<div class="t r" style="left:648px;width:81px;top:522px;line-height:40px">3.47</div>
<div class="t r" style="left:733px;width:76px;top:522px;line-height:40px">0.00</div>
<div class="t r" style="left:1228px;width:96px;top:522px;line-height:40px">0.40</div>
<div class="t r" style="left:1328px;width:76px;top:522px;line-height:40px">0.00</div>
<div class="t tx" style="left:1412px;top:522px;line-height:40px">Al CC 3.0</div>
<svg style="position:absolute;left:839px;top:534px" width="24" height="16"><use href="#eye"/></svg>
<svg style="position:absolute;left:902px;top:524px" width="50" height="34"><use href="#noscore"/></svg>
<svg style="position:absolute;left:992px;top:530px" width="19" height="24"><use href="#export"/></svg>
<svg style="position:absolute;left:1064px;top:534px" width="24" height="16"><use href="#email"/></svg>
<svg style="position:absolute;left:1143px;top:531px" width="16" height="21"><use href="#lock"/></svg>
<svg style="position:absolute;left:1197px;top:530px" width="24" height="24"><use href="#info"/></svg>
<div style="position:absolute;left:22px;top:562px;width:1528px;height:1px;background:#d9dae1;"></div>
<svg style="position:absolute;left:25px;top:564px" width="102" height="38"><use href="#thH"/></svg>
<div class="t b" style="left:132px;top:563px;line-height:40px;color:#e45c46">Shock</div>
<div class="t b" style="left:212px;top:563px;line-height:40px">BMW740i</div>
<div class="t bn" style="left:412px;top:563px;line-height:40px">X017618</div>
<div class="t bn" style="left:512px;top:563px;line-height:40px">3/27/2014 2:11:54 PM</div>
<div class="t r bn" style="left:648px;width:82px;top:563px;line-height:40px">2.97</div>
<div class="t r bn" style="left:733px;width:77px;top:563px;line-height:40px">0.00</div>
<div class="t r bn" style="left:1228px;width:97px;top:563px;line-height:40px">0.30</div>
<div class="t r bn" style="left:1328px;width:77px;top:563px;line-height:40px">0.00</div>
<div class="t b" style="left:1412px;top:563px;line-height:40px">Al CC 3.0</div>
<svg style="position:absolute;left:839px;top:574px" width="24" height="18"><use href="#image"/></svg>
<svg style="position:absolute;left:902px;top:565px" width="50" height="34"><use href="#noscore"/></svg>
<svg style="position:absolute;left:992px;top:571px" width="19" height="24"><use href="#export"/></svg>
<svg style="position:absolute;left:1064px;top:575px" width="24" height="16"><use href="#email"/></svg>
<svg style="position:absolute;left:1143px;top:572px" width="16" height="21"><use href="#lock"/></svg>
<svg style="position:absolute;left:1197px;top:571px" width="24" height="24"><use href="#info"/></svg>
<div style="position:absolute;left:22px;top:603px;width:1528px;height:1px;background:#d9dae1;"></div>
<svg style="position:absolute;left:25px;top:605px" width="102" height="38"><use href="#thH"/></svg>
<div class="t b" style="left:132px;top:604px;line-height:40px;color:#e45c46">Shock</div>
<div class="t b" style="left:212px;top:604px;line-height:40px">BMW740i</div>
<div class="t bn" style="left:412px;top:604px;line-height:40px">X017617</div>
<div class="t bn" style="left:512px;top:604px;line-height:40px">3/27/2014 2:10:11 PM</div>
<div class="t r bn" style="left:648px;width:82px;top:604px;line-height:40px">3.16</div>
<div class="t r bn" style="left:733px;width:77px;top:604px;line-height:40px">0.00</div>
<div class="t r bn" style="left:1228px;width:97px;top:604px;line-height:40px">0.40</div>
<div class="t r bn" style="left:1328px;width:77px;top:604px;line-height:40px">0.00</div>
<div class="t b" style="left:1412px;top:604px;line-height:40px">Al CC 3.0</div>
<svg style="position:absolute;left:839px;top:615px" width="24" height="18"><use href="#image"/></svg>
<svg style="position:absolute;left:902px;top:606px" width="50" height="34"><use href="#noscore"/></svg>
<svg style="position:absolute;left:992px;top:612px" width="19" height="24"><use href="#export"/></svg>
<svg style="position:absolute;left:1064px;top:616px" width="24" height="16"><use href="#email"/></svg>
<svg style="position:absolute;left:1143px;top:613px" width="16" height="21"><use href="#lock"/></svg>
<svg style="position:absolute;left:1197px;top:612px" width="24" height="24"><use href="#info"/></svg>
<div style="position:absolute;left:22px;top:644px;width:1528px;height:1px;background:#d9dae1;"></div>
<svg style="position:absolute;left:25px;top:646px" width="102" height="38"><use href="#thH"/></svg>
<div class="t b" style="left:132px;top:645px;line-height:40px;color:#e45c46">Shock</div>
<div class="t b" style="left:212px;top:645px;line-height:40px">BMW740i</div>
<div class="t bn" style="left:412px;top:645px;line-height:40px">X017616</div>
<div class="t bn" style="left:512px;top:645px;line-height:40px">3/27/2014 1:56:45 PM</div>
<div class="t r bn" style="left:648px;width:82px;top:645px;line-height:40px">3.28</div>
<div class="t r bn" style="left:1228px;width:97px;top:645px;line-height:40px">0.40</div>
<div class="t b" style="left:1412px;top:645px;line-height:40px">Al CC 3.0</div>
<svg style="position:absolute;left:839px;top:656px" width="24" height="18"><use href="#image"/></svg>
<svg style="position:absolute;left:902px;top:647px" width="50" height="34"><use href="#noscore"/></svg>
<svg style="position:absolute;left:992px;top:653px" width="19" height="24"><use href="#export"/></svg>
<svg style="position:absolute;left:1064px;top:657px" width="24" height="16"><use href="#email"/></svg>
<svg style="position:absolute;left:1143px;top:654px" width="16" height="21"><use href="#lock"/></svg>
<svg style="position:absolute;left:1197px;top:653px" width="24" height="24"><use href="#info"/></svg>
<div style="position:absolute;left:22px;top:685px;width:1528px;height:1px;background:#d9dae1;"></div>
<svg style="position:absolute;left:25px;top:687px" width="102" height="38"><use href="#thH"/></svg>
<div class="t tx" style="left:132px;top:686px;line-height:40px;color:#e45c46">Shock</div>
<div class="t tx" style="left:212px;top:686px;line-height:40px">BMW740i</div>
<div class="t" style="left:412px;top:686px;line-height:40px">X017615</div>
<div class="t" style="left:512px;top:686px;line-height:40px">3/27/2014 1:31:30 PM</div>
<div class="t r" style="left:648px;width:81px;top:686px;line-height:40px">3.06</div>
<div class="t r" style="left:1228px;width:96px;top:686px;line-height:40px">0.40</div>
<div class="t tx" style="left:1412px;top:686px;line-height:40px">Al CC 3.0</div>
<svg style="position:absolute;left:839px;top:698px" width="24" height="16"><use href="#eye"/></svg>
<svg style="position:absolute;left:902px;top:688px" width="50" height="34"><use href="#noscore"/></svg>
<svg style="position:absolute;left:992px;top:694px" width="19" height="24"><use href="#export"/></svg>
<svg style="position:absolute;left:1064px;top:698px" width="24" height="16"><use href="#email"/></svg>
<svg style="position:absolute;left:1143px;top:695px" width="16" height="21"><use href="#lock"/></svg>
<svg style="position:absolute;left:1197px;top:694px" width="24" height="24"><use href="#info"/></svg>
<div style="position:absolute;left:22px;top:726px;width:1528px;height:1px;background:#d9dae1;"></div>
<svg style="position:absolute;left:25px;top:728px" width="102" height="38"><use href="#thI"/></svg>
<div class="t tx" style="left:132px;top:727px;line-height:40px;color:#e45c46">Shock</div>
<div class="t tx" style="left:212px;top:727px;line-height:40px">BMW740i</div>
<div class="t" style="left:412px;top:727px;line-height:40px">X017633</div>
<div class="t" style="left:512px;top:727px;line-height:40px">12/30/2013 11:25:33 AM</div>
<div class="t r" style="left:648px;width:81px;top:727px;line-height:40px">3.06</div>
<div class="t r" style="left:733px;width:76px;top:727px;line-height:40px">0.00</div>
<div class="t r" style="left:1228px;width:96px;top:727px;line-height:40px">0.30</div>
<div class="t r" style="left:1328px;width:76px;top:727px;line-height:40px">0.00</div>
<div class="t tx" style="left:1412px;top:727px;line-height:40px">Al CC 3.0</div>
<svg style="position:absolute;left:839px;top:739px" width="24" height="16"><use href="#eye"/></svg>
<svg style="position:absolute;left:902px;top:729px" width="50" height="34"><use href="#noscore"/></svg>
<svg style="position:absolute;left:992px;top:735px" width="19" height="24"><use href="#export"/></svg>
<svg style="position:absolute;left:1064px;top:739px" width="24" height="16"><use href="#email"/></svg>
<svg style="position:absolute;left:1143px;top:736px" width="16" height="21"><use href="#lock"/></svg>
<svg style="position:absolute;left:1197px;top:735px" width="24" height="24"><use href="#info"/></svg>
<div style="position:absolute;left:22px;top:767px;width:1528px;height:1px;background:#d9dae1;"></div>
<svg style="position:absolute;left:25px;top:769px" width="102" height="38"><use href="#thJ"/></svg>
<div class="t tx" style="left:132px;top:768px;line-height:40px;color:#e45c46">Shock</div>
<div class="t tx" style="left:212px;top:768px;line-height:40px">BMW740i</div>
<div class="t" style="left:412px;top:768px;line-height:40px">X017632</div>
<div class="t" style="left:512px;top:768px;line-height:40px">12/30/2013 11:25:14 AM</div>
<div class="t r" style="left:648px;width:81px;top:768px;line-height:40px">3.28</div>
<div class="t r" style="left:733px;width:76px;top:768px;line-height:40px">0.00</div>
<div class="t r" style="left:1228px;width:96px;top:768px;line-height:40px">0.30</div>
<div class="t r" style="left:1328px;width:76px;top:768px;line-height:40px">0.00</div>
<div class="t tx" style="left:1412px;top:768px;line-height:40px">Al CC 3.0</div>
<svg style="position:absolute;left:839px;top:780px" width="24" height="16"><use href="#eye"/></svg>
<svg style="position:absolute;left:902px;top:770px" width="50" height="34"><use href="#noscore"/></svg>
<svg style="position:absolute;left:992px;top:776px" width="19" height="24"><use href="#export"/></svg>
<svg style="position:absolute;left:1064px;top:780px" width="24" height="16"><use href="#email"/></svg>
<svg style="position:absolute;left:1143px;top:777px" width="16" height="21"><use href="#lock"/></svg>
<svg style="position:absolute;left:1197px;top:776px" width="24" height="24"><use href="#info"/></svg>
<div style="position:absolute;left:22px;top:808px;width:1528px;height:1px;background:#d9dae1;"></div>
<div style="position:absolute;left:25px;top:810px;width:51px;height:2px;background:#0a0a0a;"></div>
<div style="position:absolute;left:83px;top:810px;width:44px;height:2px;background:linear-gradient(90deg,#3a3530,#6a6258 50%,#8a8580);border-radius:2px 2px 0 0;"></div>
<svg style="position:absolute;left:902px;top:809px" width="50" height="3"><use href="#noscore_partial"/></svg>
<div style="position:absolute;left:22px;top:194px;width:1px;height:618px;background:#d9dae1;"></div>
<div style="position:absolute;left:128px;top:194px;width:1px;height:618px;background:#d9dae1;"></div>
<div style="position:absolute;left:208px;top:194px;width:1px;height:618px;background:#d9dae1;"></div>
<div style="position:absolute;left:308px;top:194px;width:1px;height:618px;background:#d9dae1;"></div>
<div style="position:absolute;left:408px;top:194px;width:1px;height:618px;background:#d9dae1;"></div>
<div style="position:absolute;left:508px;top:194px;width:1px;height:618px;background:#d9dae1;"></div>
<div style="position:absolute;left:648px;top:194px;width:1px;height:618px;background:#d9dae1;"></div>
<div style="position:absolute;left:733px;top:194px;width:1px;height:618px;background:#d9dae1;"></div>
<div style="position:absolute;left:813px;top:194px;width:1px;height:618px;background:#d9dae1;"></div>
<div style="position:absolute;left:888px;top:194px;width:1px;height:618px;background:#d9dae1;"></div>
<div style="position:absolute;left:963px;top:194px;width:1px;height:618px;background:#d9dae1;"></div>
<div style="position:absolute;left:1038px;top:194px;width:1px;height:618px;background:#d9dae1;"></div>
<div style="position:absolute;left:1113px;top:194px;width:1px;height:618px;background:#d9dae1;"></div>
<div style="position:absolute;left:1188px;top:194px;width:1px;height:618px;background:#d9dae1;"></div>
<div style="position:absolute;left:1228px;top:194px;width:1px;height:618px;background:#d9dae1;"></div>
<div style="position:absolute;left:1328px;top:194px;width:1px;height:618px;background:#d9dae1;"></div>
<div style="position:absolute;left:1408px;top:194px;width:1px;height:618px;background:#d9dae1;"></div>
<div style="position:absolute;left:1508px;top:194px;width:1px;height:618px;background:#d9dae1;"></div>
<div style="position:absolute;left:1188px;top:194px;width:41px;height:41px;border:1px dotted #222;"></div>
<svg style="position:absolute;left:11px;top:209px" width="6" height="9"><use href="#rowarrow"/></svg>
<div style="position:absolute;left:1550px;top:194px;width:17px;height:618px;background:#f0f1f4;"></div>
<svg style="position:absolute;left:1553px;top:198px" width="11" height="8"><use href="#vup"/></svg>
<svg style="position:absolute;left:1553px;top:799px" width="11" height="8"><use href="#vdown"/></svg>
<div style="position:absolute;left:1554px;top:507px;width:9px;height:95px;border:1px solid #aeb0ba;border-radius:4px;background:linear-gradient(90deg,#f6f6f8,#d6d7dd);"></div>
<div style="position:absolute;left:7px;top:812px;width:1560px;height:17px;background:#fff;"></div>
<svg style="position:absolute;left:8px;top:814px" width="200" height="12"><use href="#nav"/></svg>
<div class="t" style="left:64px;top:813px;line-height:15px;color:#1f1f3a">Record 47 of 90</div>
<div style="position:absolute;left:198px;top:812px;width:1352px;height:17px;background:#f0f1f4;"></div>
<svg style="position:absolute;left:203px;top:816px" width="7" height="9"><use href="#hleft"/></svg>
<div style="position:absolute;left:215px;top:816px;width:897px;height:8px;border:1px solid #aeb0ba;border-radius:4px;background:linear-gradient(#f6f6f8,#d6d7dd);"></div>
<svg style="position:absolute;left:1538px;top:816px" width="7" height="9"><use href="#hright"/></svg>
<div style="position:absolute;left:1550px;top:812px;width:17px;height:17px;background:#e4e5ea;"></div>
<div style="position:absolute;left:6px;top:830px;width:1563px;height:1px;background:#e6e7eb;"></div>
<div style="position:absolute;left:6px;top:831px;width:1562px;height:50px;background:#3f3f3f;"></div>
<div style="position:absolute;left:5px;top:881px;width:1564px;height:1px;background:#f6f7f9;"></div>
<div style="position:absolute;left:1568px;top:831px;width:1px;height:50px;background:#f4f5f7;"></div>
<div style="position:absolute;left:4px;top:882px;width:1566px;height:1px;background:#a0a2ac;"></div>
<div style="position:absolute;left:3px;top:883px;width:1568px;height:1px;background:#d4d5da;"></div>
<div class="btn" style="left:30px;top:842px">Show Selection</div>
<div class="btn" style="left:193px;top:842px">Export/Print Selected Events</div>
<div class="btn" style="left:356px;top:842px">Delete Selected&nbsp; Events</div>
<div style="position:absolute;left:3px;top:884px;width:1568px;height:50px;background:#3f3f3f;"></div>
<div class="btn" style="left:27px;top:895px">Review Event</div>
<div class="btn" style="left:190px;top:895px">Email Event</div>
<div class="btn" style="left:353px;top:895px">Export Event</div>
<div class="btn" style="left:516px;top:895px">Attachments</div>
<div class="btn" style="left:679px;top:895px">Unlock Event</div>
<div style="position:absolute;left:676px;top:892px;width:156px;height:36px;border:1px solid #fff;"></div>
</body></html>
